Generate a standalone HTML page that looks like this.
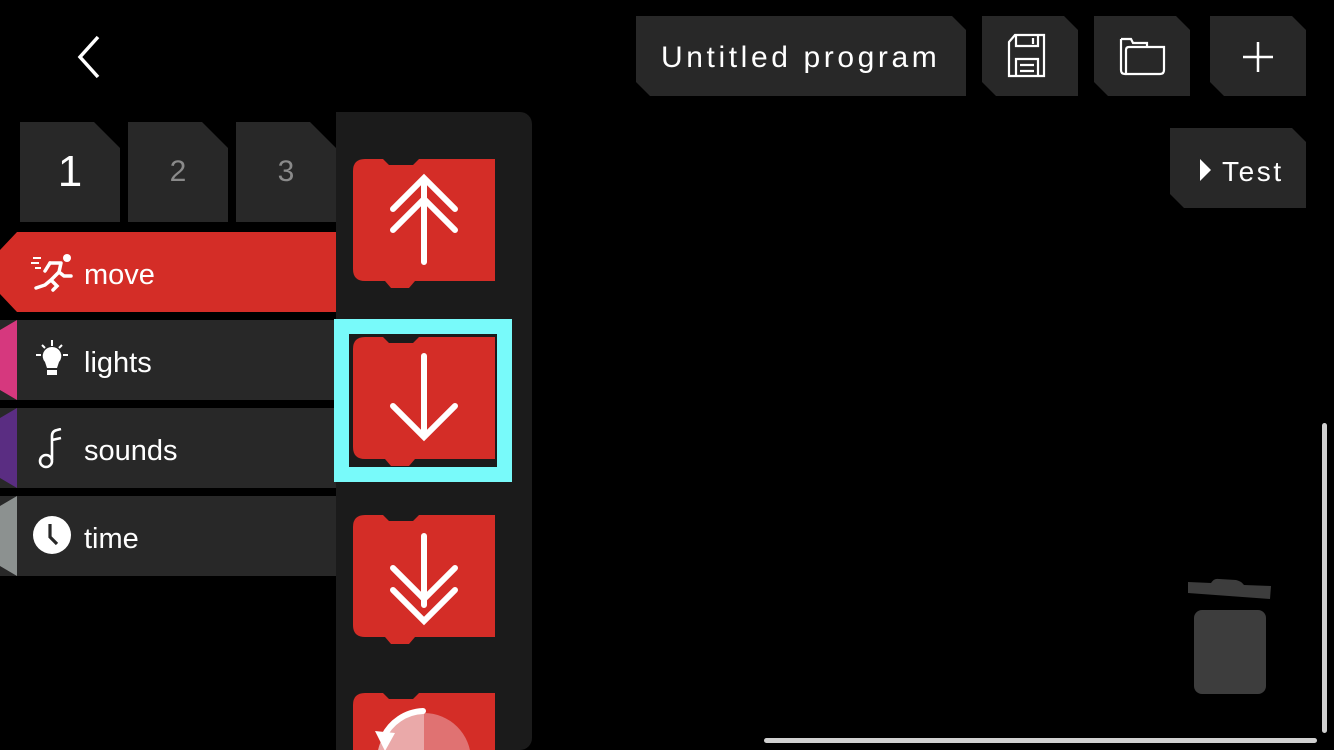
<!DOCTYPE html>
<html><head><meta charset="utf-8"><style>
*{margin:0;padding:0;box-sizing:border-box}
html,body{width:1334px;height:750px;background:#000;overflow:hidden;font-family:"Liberation Sans",sans-serif;color:#fff;position:relative}
.a{position:absolute}
.btn{position:absolute;background:#282828;clip-path:polygon(0 0,calc(100% - 14px) 0,100% 14px,100% 100%,14px 100%,0 calc(100% - 14px))}
.tab{position:absolute;background:#282828;clip-path:polygon(0 0,calc(100% - 26px) 0,100% 26px,100% 100%,0 100%);display:flex;align-items:center;justify-content:center}
.cat{position:absolute;left:0;width:336px;height:80px;background:#282828}
.cat .strip{position:absolute;left:0;top:0;width:17px;height:80px;clip-path:polygon(100% 0,100% 100%,0 70px,0 10px)}
.cat span{position:absolute;left:84px;top:27px;font-size:29px}
</style></head><body>
<svg class="a" style="left:74px;top:34px" width="30" height="46"><path d="M24 3 L6 23 L24 43" stroke="#fff" stroke-width="3.5" fill="none"/></svg>

<div class="btn" style="left:636px;top:16px;width:330px;height:80px"></div>
<div class="a" style="left:661px;top:41px;font-size:30px;letter-spacing:3.6px;white-space:nowrap">Untitled program</div>
<div class="btn" style="left:982px;top:16px;width:96px;height:80px"></div>
<svg class="a" style="left:1006px;top:33px" width="48" height="46" fill="none" stroke="#fff" stroke-width="2.2"><path d="M9 2 H38 V43 H3 V9 Z"/><path d="M10 2 V13 H32 V2"/><path d="M27 5 V11"/><path d="M10 43 V26 H32 V43"/><path d="M14 32 H28 M14 38 H28"/></svg>
<div class="btn" style="left:1094px;top:16px;width:96px;height:80px"></div>
<svg class="a" style="left:1118px;top:36px" width="48" height="40" fill="none" stroke="#fff" stroke-width="2.2"><path d="M3 3 H13 L15 7 H29 V11"/><path d="M3 3 V34 Q3 38 7 38 H42 Q46 38 46 34 V11 H11 Q8 11 8 14 V37"/></svg>
<div class="btn" style="left:1210px;top:16px;width:96px;height:80px"></div>
<svg class="a" style="left:1242px;top:41px" width="32" height="32"><path d="M16 1 V31 M1 16 H31" stroke="#fff" stroke-width="2.5"/></svg>
<div class="btn" style="left:1170px;top:128px;width:136px;height:80px"></div>
<svg class="a" style="left:1200px;top:159px" width="12" height="22"><path d="M0 0 L11 11 L0 22 Z" fill="#fff"/></svg>
<div class="a" style="left:1222px;top:156px;font-size:28px;letter-spacing:2.6px">Test</div>

<div class="a" style="left:336px;top:112px;width:196px;height:638px;background:#1b1b1b;border-radius:0 12px 12px 0"></div>

<div class="tab" style="left:20px;top:122px;width:100px;height:100px;font-size:44px;color:#fff">1</div>
<div class="tab" style="left:128px;top:122px;width:100px;height:100px;font-size:30px;color:#8a8a8a">2</div>
<div class="tab" style="left:236px;top:122px;width:100px;height:100px;font-size:30px;color:#8a8a8a">3</div>

<div class="cat" style="top:232px;background:#d42d27;clip-path:polygon(17px 0,100% 0,100% 100%,17px 100%,0 62px,0 18px)"><span>move</span></div>
<svg class="a" style="left:31px;top:252px" width="42" height="40" fill="#fff"><circle cx="36" cy="6" r="4"/><path d="M19 11 L30 11 L28 20 L33 24 L40 24" stroke="#fff" stroke-width="3.5" fill="none" stroke-linejoin="round" stroke-linecap="round"/><path d="M14 19 L19 11 M28 20 L20 28 L26 34 L22 38 M20 28 L14 33 L5 36" stroke="#fff" stroke-width="3.5" fill="none" stroke-linecap="round"/><path d="M2 6 H10 M0 11 H8 M4 16 H10" stroke="#fff" stroke-width="2"/></svg>

<div class="cat" style="top:320px"><div class="strip" style="background:#d6387e"></div><span>lights</span></div>
<svg class="a" style="left:35px;top:340px" width="34" height="40"><path d="M17 0 V6 M7 5 L10 8 M27 5 L24 8 M1 15 H6 M28 15 H33" stroke="#fff" stroke-width="2"/><path d="M17 7 A9 9 0 0 1 24 22 L22 28 H12 L10 22 A9 9 0 0 1 17 7 Z" fill="#fff"/><rect x="12" y="30" width="10" height="5" fill="#fff"/></svg>

<div class="cat" style="top:408px"><div class="strip" style="background:#5a2d82"></div><span>sounds</span></div>
<svg class="a" style="left:37px;top:428px" width="26" height="42" fill="none" stroke="#fff" stroke-width="2.6"><path d="M15 32 V8 Q15 3 20 2 L24 1 M15 12 L24 10"/><circle cx="9" cy="33" r="6"/></svg>

<div class="cat" style="top:496px"><div class="strip" style="background:#8c9190"></div><span>time</span></div>
<svg class="a" style="left:32px;top:515px" width="40" height="40"><circle cx="20" cy="20" r="19" fill="#fff"/><path d="M18 9 V22 L25 29" stroke="#282828" stroke-width="3.2" fill="none"/></svg>

<svg class="a" style="left:334px;top:150px" width="200" height="600">
<defs><path id="b" d="M12 0 H30 L36 6 H60 L66 0 H142 V122 H62 L56 129 H38 L32 122 H12 Q0 122 0 110 V12 Q0 0 12 0 Z" fill="#d42d27"/></defs>
<g transform="translate(19 9)"><use href="#b"/><g stroke="#fff" stroke-width="6" stroke-linecap="round" fill="none"><path d="M71 103 V24 M40 50 L71 19 L102 50 M40 71 L71 40 L102 71"/></g></g>
<rect x="7.5" y="176.5" width="163" height="148" fill="none" stroke="#78fafa" stroke-width="15"/>
<g transform="translate(19 187)"><use href="#b"/><g stroke="#fff" stroke-width="6" stroke-linecap="round" fill="none"><path d="M71 19 V100 M40 69 L71 100 L102 69"/></g></g>
<g transform="translate(19 365)"><use href="#b"/><g stroke="#fff" stroke-width="6" stroke-linecap="round" fill="none"><path d="M71 21 V90 M40 53 L71 84 L102 53 M40 75 L71 106 L102 75"/></g></g>
<g transform="translate(19 543)"><use href="#b"/><path d="M71 20 A47 47 0 0 1 118 67 V90 H71 Z" fill="#e07272"/><path d="M71 20 A47 47 0 0 0 24 67 V90 H71 Z" fill="#eaa9a9"/><path d="M70 18 A46 46 0 0 0 30 45" stroke="#fff" stroke-width="6" fill="none" stroke-linecap="round"/><path d="M22 38 L32 58 L42 40 Z" fill="#fff"/></g>
</svg>

<svg class="a" style="left:1186px;top:578px" width="90" height="118" fill="#3d3d3d"><path d="M2 4 L25 5 Q28 0 33 1 L50 2 Q55 3 58 7 L85 8 L84 21 L2 15 Z"/><rect x="8" y="32" width="72" height="84" rx="8"/></svg>

<div class="a" style="left:1322px;top:423px;width:5px;height:310px;background:#d0d0d0;border-radius:3px"></div>
<div class="a" style="left:764px;top:738px;width:553px;height:5px;background:#d0d0d0;border-radius:3px"></div>
</body></html>
